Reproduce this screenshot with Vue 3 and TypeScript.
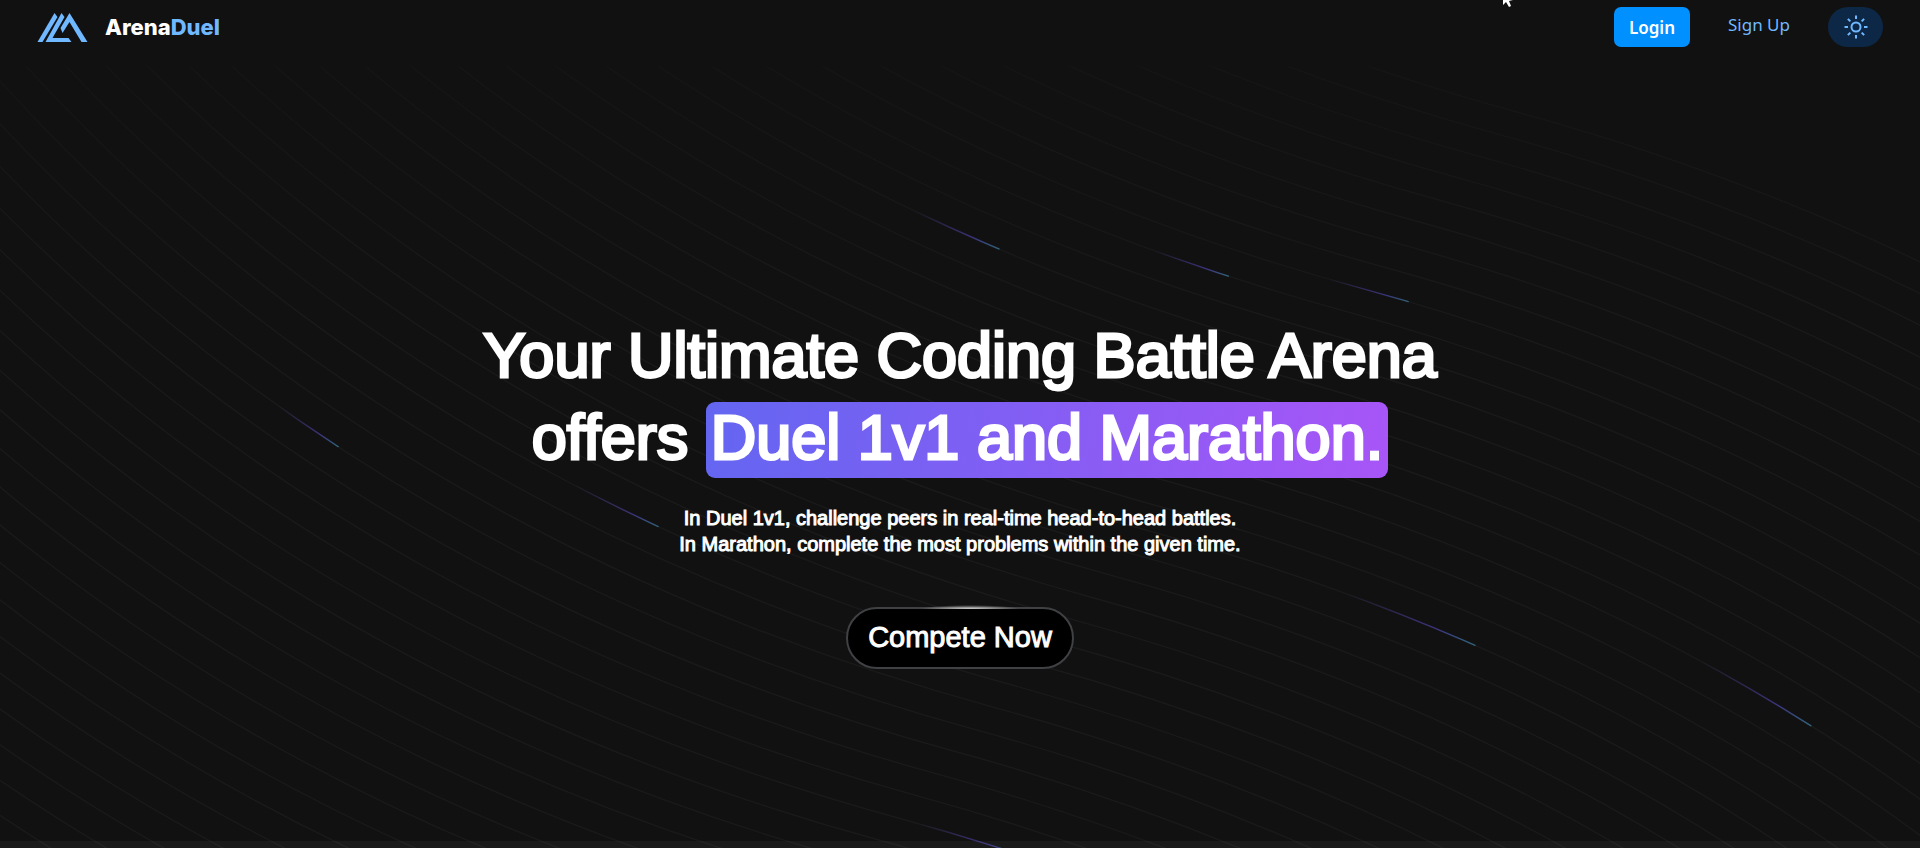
<script setup lang="ts">
interface Streak {
  line: number
  x: number
  y: number
  dx: number
  dy: number
}

const LINE_COUNT = 50
const SCALE = 1920 / 696

// Each line is one S-curve, mirrored around its middle point.
function linePath(index: number): string {
  const cx = 1517 - 7 * SCALE * index
  const cy = 112 + 8 * SCALE * index
  const at = (x: number, y: number): string =>
    `${(cx + x * SCALE).toFixed(1)} ${(cy + y * SCALE).toFixed(1)}`
  return (
    `M${at(-532, -532)}C${at(-532, -532)} ${at(-464, -127)} ${at(0, 0)}` +
    `C${at(464, 127)} ${at(532, 532)} ${at(532, 532)}`
  )
}

const lines: string[] = Array.from({ length: LINE_COUNT }, (_, i) => linePath(i))

const streaks: Streak[] = [
  { line: 11, x: 1000, y: 249, dx: 85, dy: 37 },
  { line: 9, x: 1229, y: 277, dx: 75, dy: 25 },
  { line: 8, x: 1409, y: 302, dx: 80, dy: 24 },
  { line: 28, x: 339, y: 447, dx: 60, dy: 44 },
  { line: 25, x: 659, y: 527, dx: 85, dy: 40 },
  { line: 19, x: 1476, y: 646, dx: 130, dy: 54 },
  { line: 16, x: 1812, y: 726, dx: 110, dy: 68 },
  { line: 32, x: 1020, y: 855, dx: 100, dy: 33 },
]

const rays: number[] = [0, 45, 90, 135, 180, 225, 270, 315]
</script>

<template>
  <div class="page">
    <svg class="beams" viewBox="0 0 1920 848" preserveAspectRatio="xMidYMin slice" aria-hidden="true">
      <defs>
        <linearGradient id="fade" x1="0" y1="0" x2="0" y2="1">
          <stop offset="0.075" stop-color="#fff" stop-opacity="0" />
          <stop offset="0.08" stop-color="#fff" stop-opacity="0.5" />
          <stop offset="0.4" stop-color="#fff" stop-opacity="1" />
        </linearGradient>
        <mask id="fadeMask" maskUnits="userSpaceOnUse" x="0" y="0" width="1920" height="848">
          <rect width="1920" height="848" fill="url(#fade)" />
        </mask>
        <linearGradient
          v-for="(s, i) in streaks"
          :id="`streak-${i}`"
          :key="i"
          gradientUnits="userSpaceOnUse"
          :x1="s.x - s.dx"
          :y1="s.y - s.dy"
          :x2="s.x"
          :y2="s.y"
        >
          <stop offset="0" stop-color="#8048ff" stop-opacity="0" />
          <stop offset="0.7" stop-color="#6354f5" />
          <stop offset="0.99" stop-color="#4cbcec" />
          <stop offset="1" stop-color="#4cbcec" stop-opacity="0" />
        </linearGradient>
      </defs>
      <g mask="url(#fadeMask)">
        <path v-for="(d, i) in lines" :key="i" :d="d" class="line" />
      </g>
      <path
        v-for="(s, i) in streaks"
        :key="i"
        :d="lines[s.line]"
        class="streak"
        :stroke="`url(#streak-${i})`"
      />
    </svg>

    <header class="header">
      <a href="#" class="brand">
        <svg class="logo" viewBox="0 0 50 30" aria-hidden="true">
          <path d="M0 30 17 1 20 5 5 30Z" />
          <path d="M8 30 24 1 27 5 15 26H31L34 30Z" />
          <path d="M32 1 50 30H44L32 10 25 21 23 16Z" />
        </svg>
        <span class="brand-name">Arena<span class="accent">Duel</span></span>
      </a>
      <nav class="nav">
        <button type="button" class="login">Login</button>
        <a href="#" class="signup">Sign Up</a>
        <button type="button" class="theme" aria-label="Toggle theme">
          <svg class="sun" viewBox="0 0 24 24" aria-hidden="true">
            <circle cx="12" cy="12" r="4.5" />
            <path v-for="a in rays" :key="a" d="M12 0.5V4" :transform="`rotate(${a} 12 12)`" />
          </svg>
        </button>
      </nav>
    </header>

    <main class="hero">
      <h1 class="title">
        Your Ultimate Coding Battle Arena<br />
        offers <span class="mark">Duel 1v1 and Marathon.</span>
      </h1>
      <p class="lead">
        In Duel 1v1, challenge peers in real-time head-to-head battles.<br />
        In Marathon, complete the most problems within the given time.
      </p>
      <button type="button" class="cta">Compete Now</button>
    </main>

    <div class="strip"></div>

    <svg class="pointer" viewBox="0 0 12 9" aria-hidden="true">
      <path d="M1 0H11L7 1 9 6 7 7 4 2 1 5Z" />
    </svg>
  </div>
</template>

<style>
body {
  margin: 0;
  background: #111;
}
</style>

<style scoped>
.page {
  position: relative;
  display: flex;
  flex-direction: column;
  min-height: 100vh;
  overflow: hidden;
  background: #111;
  color: #fff;
  font-family: "Liberation Sans", Arial, sans-serif;
}

.beams {
  position: absolute;
  inset: 0;
  width: 100%;
  height: 100%;
  pointer-events: none;
}

.line {
  fill: none;
  stroke: #fff;
  stroke-opacity: 0.04;
  stroke-width: 1.4;
}

.streak {
  fill: none;
  stroke-opacity: 0.45;
  stroke-width: 1.4;
}

.header {
  position: relative;
  display: flex;
  align-items: center;
  justify-content: space-between;
  padding: 7px 37px;
}

.brand {
  display: flex;
  align-items: center;
  gap: 17px;
  color: #fff;
  text-decoration: none;
}

.logo {
  width: 51px;
  height: 30px;
  fill: #70b8ff;
}

.brand-name {
  font-family: Inter, sans-serif;
  font-size: 22px;
  font-weight: 800;
}

.accent {
  color: #70b8ff;
}

.nav {
  display: flex;
  align-items: center;
  gap: 38px;
  font-family: "Noto Sans", sans-serif;
}

.login {
  height: 40px;
  padding: 0 15px;
  border: 0;
  border-radius: 7px;
  background: #0090ff;
  color: #fff;
  font: 600 17px "Noto Sans", sans-serif;
}

.signup {
  padding-bottom: 5px;
  color: #70b8ff;
  font-size: 17px;
  text-decoration: none;
}

.theme {
  display: grid;
  place-items: center;
  width: 55px;
  height: 40px;
  padding: 0;
  border: 0;
  border-radius: 20px;
  background: #0d2847;
}

.sun {
  width: 24px;
  height: 24px;
  fill: none;
  stroke: #70b8ff;
  stroke-width: 2;
}

.hero {
  position: relative;
  display: flex;
  flex: 1;
  flex-direction: column;
  align-items: center;
  justify-content: center;
  padding: 87px 24px 0;
  text-align: center;
}

.title {
  margin: 0 0 27px;
  font-size: 63px;
  font-weight: 400;
  line-height: 82px;
  -webkit-text-stroke: 3px #fff;
}

.mark {
  padding: 0 5px 6px;
  border-radius: 9px;
  background: linear-gradient(100deg, #6366f1, #a855f7);
}

.lead {
  margin: 0 0 50px;
  font-size: 20px;
  line-height: 26px;
  -webkit-text-stroke: 1px #fff;
}

.cta {
  position: relative;
  height: 62px;
  padding: 0 20px;
  border: 2px solid #404144;
  border-radius: 31px;
  background: #000;
  color: #fff;
  font: 400 29px "Liberation Sans", Arial, sans-serif;
  -webkit-text-stroke: 1px #fff;
}

.cta::before {
  content: "";
  position: absolute;
  top: -4px;
  left: 50%;
  width: 100px;
  height: 4px;
  margin-left: -40px;
  background: radial-gradient(ellipse at bottom, #d0d0d0, transparent 70%);
}

.strip {
  position: relative;
  height: 7px;
  background: rgba(255, 255, 255, 0.04);
}

.pointer {
  position: absolute;
  top: 0;
  right: 406px;
  width: 12px;
  height: 9px;
  fill: #fff;
}
</style>
